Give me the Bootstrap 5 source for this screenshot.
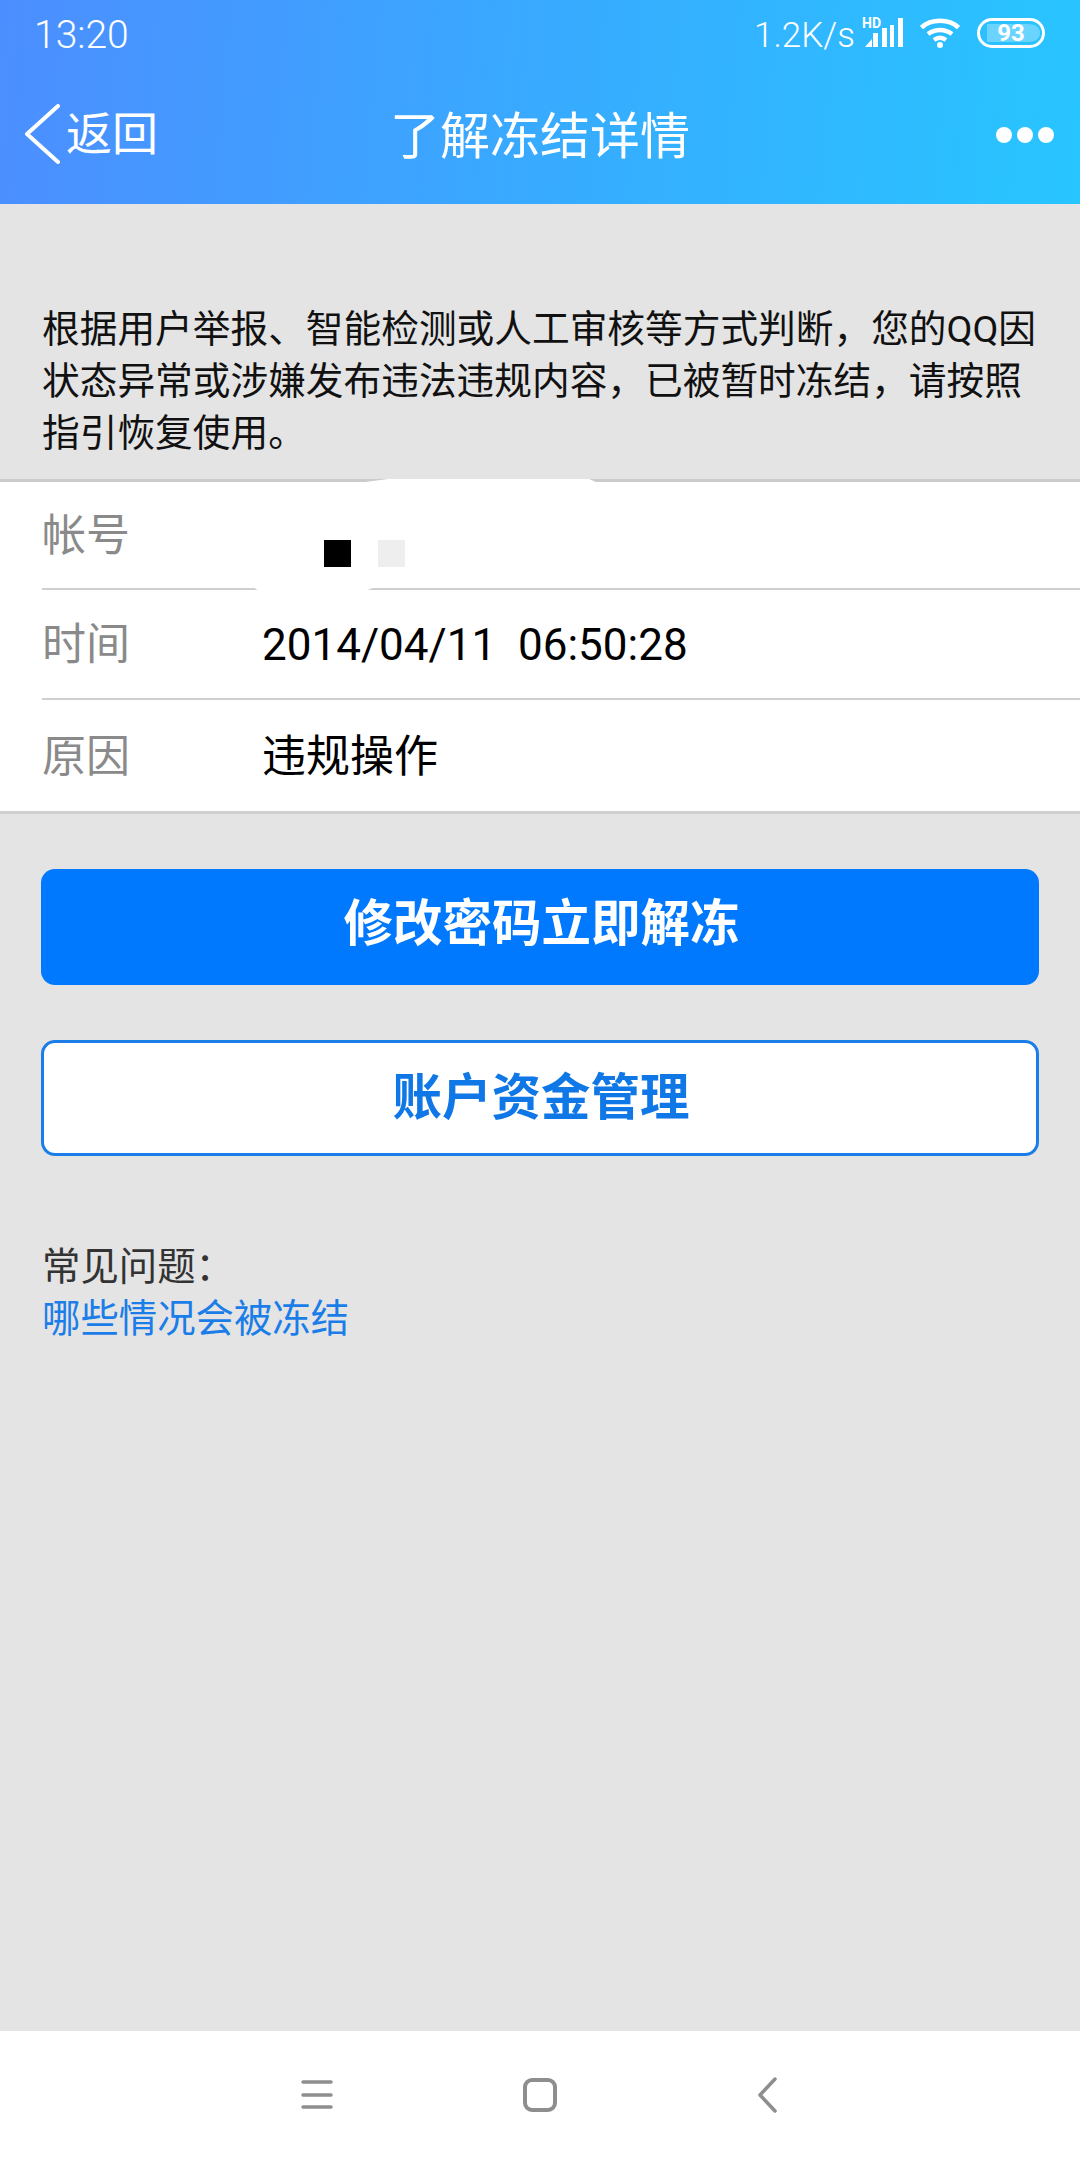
<!DOCTYPE html>
<html lang="zh-CN">
<head>
  <meta charset="UTF-8">
  <title>了解冻结详情</title>
  <meta name="viewport" content="width=device-width, initial-scale=1">
  <link href="https://cdn.jsdelivr.net/npm/bootstrap@5.3.0/dist/css/bootstrap.min.css" rel="stylesheet">
  <style>
    body { width: 1080px; height: 2160px; background: #e4e4e4; font-family: Roboto, "Noto Sans CJK SC", sans-serif; overflow: hidden; color: #000; }
    .app-top { height: 204px; background: linear-gradient(95deg, #4c8eff 0%, #38aaff 50%, #28c5ff 100%); color: #fff; }
    .status-row { height: 70px; padding: 0 35px 0 34px; }
    .status-time { font-size: 39px; line-height: 1; font-weight: 300; }
    .status-speed { font-size: 35px; line-height: 1; font-weight: 300; margin-right: 7px; }
    .status-ico { margin-bottom: 4px; }
    .signal-ico { margin-bottom: 8px; }
    .ico-gap { margin-left: 17px; }
    .title-row { height: 134px; }
    .title-side { width: 240px; flex: none; }
    .back-link { font-size: 46px; color: #fff; padding: 0 0 6px 25px; line-height: 1; }
    .page-title { font-size: 50px; line-height: 1; }
    .dots { padding: 0 25px 5px 0; }
    .intro { font-size: 37.7px; line-height: 52px; margin: 99px 0 20px; padding: 0 42px; white-space: nowrap; color: #111; }
    .info-box { background: #fff; border-top: 3px solid #cbcbcb; border-bottom: 3px solid #cfcfcf; }
    .info-line { margin-left: 42px; height: 110px; border-bottom: 2px solid #cfcfcf; padding-top: 2px; }
    .info-line:first-child { height: 108px; }
    .info-line:last-child { border-bottom: 0; height: 111px; }
    .info-label { width: 220px; font-size: 44px; color: #8a8a8a; flex: none; }
    .info-value { font-size: 44px; line-height: 1; }
    .mask-dark { width: 27px; height: 27px; background: #000; }
    .mask-light { width: 27px; height: 27px; background: #eee; }
    .mask-row { padding: 35px 0 0 62px; gap: 27px; }
    .patch { position: absolute; fill: #fff; }
    .patch-top { left: 335px; top: 479px; }
    .patch-mid { left: 252px; top: 586px; }
    .actions { padding: 55px 41px 0; gap: 55px; }
    .btn.act-btn { height: 116px; border-radius: 14px; font-size: 49.5px; font-weight: 700; line-height: 1; display: flex; align-items: center; justify-content: center; }
    .btn.act-main { background: #0079ff; border: 0; color: #fff; padding: 0 0 4px 3px; }
    .btn.act-line { background: #fff; border: 3px solid #1a7de8; color: #0f78e6; padding: 2px 0 0 2px; }
    .faq { padding: 85px 42px 0; font-size: 38.4px; line-height: 52px; color: #333; }
    .faq a { color: #1a7de8; text-decoration: none; }
    .sys-nav { left: 0; right: 0; bottom: 0; height: 129px; background: #fff; }
  </style>
</head>
<body>

<div class="position-relative vh-100">
  <!-- barra azul -->
  <div class="app-top">
    <div class="status-row d-flex align-items-center justify-content-between">
      <span class="status-time">13:20</span>
      <div class="d-flex align-items-center">
        <span class="status-speed">1.2K/s</span>
        <svg class="signal-ico" width="41" height="34" viewBox="0 -4 41 34" fill="#fff">
          <text x="0" y="10" font-family="Roboto" font-weight="700" font-size="14">HD</text>
          <path d="M3 29 L10 21 V29 Z"/>
          <rect x="11" y="15" width="5" height="14"/>
          <rect x="20" y="10" width="5" height="19"/>
          <rect x="28" y="7" width="4" height="22"/>
          <rect x="36" y="0" width="5" height="29"/>
        </svg>
        <svg class="status-ico ico-gap" width="40" height="30" viewBox="0 0 40 30" fill="none" stroke="#fff" stroke-width="4.5">
          <path d="M1.5 9.5 C11 0.5 29 0.5 38.5 9.5"/>
          <path d="M8 16 C15 10.5 25 10.5 32 16"/>
          <path d="M14 22 C18 19 22 19 26 22"/>
          <circle cx="20" cy="27" r="3" fill="#fff" stroke="none"/>
        </svg>
        <svg class="status-ico ico-gap" width="68" height="30" viewBox="0 0 68 30">
          <rect x="1.5" y="1.5" width="65" height="27" rx="13.5" fill="none" stroke="#fff" stroke-width="3"/>
          <path d="M10 6 H51 C58 6 63 9 63 15 C63 21 58 24 51 24 H10 Z" fill="#fff" fill-opacity=".3"/>
          <text x="34" y="23" text-anchor="middle" font-family="Roboto" font-weight="700" font-size="24" fill="#fff">93</text>
        </svg>
      </div>
    </div>
    <div class="title-row d-flex align-items-center justify-content-between">
      <a class="back-link title-side d-flex align-items-center text-decoration-none" href="#">
        <svg width="41" height="60" viewBox="0 0 41 60" fill="none" stroke="#fff" stroke-width="4" stroke-linecap="round" stroke-linejoin="round">
          <path d="M33 2 L2 30 L33 58"/>
        </svg>
        <span>返回</span>
      </a>
      <div class="page-title">了解冻结详情</div>
      <div class="title-side dots d-flex justify-content-end">
        <svg width="60" height="20" viewBox="0 0 60 20" fill="#fff">
          <circle cx="9" cy="10" r="8"/><circle cx="30" cy="10" r="8"/><circle cx="51" cy="10" r="8"/>
        </svg>
      </div>
    </div>
  </div>

  <p class="intro">根据用户举报、智能检测或人工审核等方式判断，您的QQ因<br>状态异常或涉嫌发布违法违规内容，已被暂时冻结，请按照<br>指引恢复使用。</p>

  <div class="info-box">
    <div class="info-line d-flex align-items-center">
      <div class="info-label">帐号</div>
      <div class="mask-row d-flex">
        <div class="mask-dark"></div>
        <div class="mask-light"></div>
      </div>
    </div>
    <div class="info-line d-flex align-items-center">
      <div class="info-label">时间</div>
      <div class="info-value">2014/04/11&nbsp; 06:50:28</div>
    </div>
    <div class="info-line d-flex align-items-center">
      <div class="info-label">原因</div>
      <div class="info-value">违规操作</div>
    </div>
  </div>
  <!-- manchas blancas del recorte sobre las lineas -->
  <svg class="patch patch-top" width="270" height="8" viewBox="0 0 270 8"><path d="M53 0 H254 L270 7 H0 Z"/></svg>
  <svg class="patch patch-mid" width="126" height="6" viewBox="0 0 126 6"><path d="M0 0 H126 L110 6 H8 Z"/></svg>

  <div class="actions d-flex flex-column">
    <button type="button" class="btn act-btn act-main">修改密码立即解冻</button>
    <button type="button" class="btn act-btn act-line">账户资金管理</button>
  </div>

  <div class="faq">
    <div>常见问题：</div>
    <a href="#">哪些情况会被冻结</a>
  </div>

  <!-- barra del sistema -->
  <div class="sys-nav position-absolute">
    <svg class="d-block" width="1080" height="129" viewBox="0 0 1080 129" fill="none" stroke="#8e8e8e" stroke-width="3.5" stroke-linecap="round" stroke-linejoin="round">
      <path d="M303 51 H331 M303 64 H331 M303 76 H331"/>
      <rect x="525" y="49" width="30" height="30" rx="7" stroke-width="4"/>
      <path d="M775 48 L760 64 L775 80"/>
    </svg>
  </div>
</div>

<script src="https://cdn.jsdelivr.net/npm/bootstrap@5.3.0/dist/js/bootstrap.bundle.min.js"></script>
</body>
</html>
